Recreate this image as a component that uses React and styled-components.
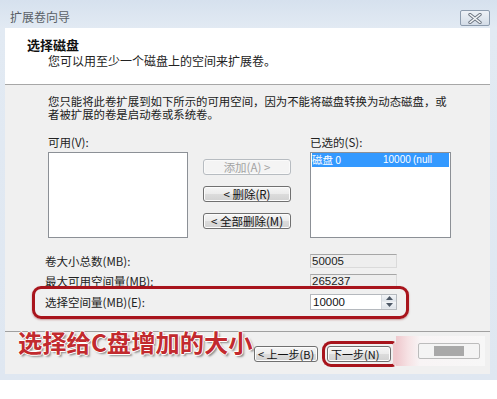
import React from "react";
import styled, { createGlobalStyle } from "styled-components";

const GlobalStyle = createGlobalStyle`
  body {
    margin: 0;
    background: #ffffff;
    font-family: "Noto Sans CJK SC", "DejaVu Sans", sans-serif;
  }
`;

const CJK = `"Noto Sans CJK SC", "Liberation Sans", sans-serif`;

export default function App() {
  return (
    <>
      <GlobalStyle />
      <Window>
        <TitleBar>
          <Title>扩展卷向导</Title>
          <CloseButton>
            <svg width="14" height="11" viewBox="0 0 14 11">
              <path d="M2 1.5 L12 9.5 M12 1.5 L2 9.5" stroke="#6b7480" strokeWidth="3.4" strokeLinecap="round" />
              <path d="M2 1.5 L12 9.5 M12 1.5 L2 9.5" stroke="#f4f6f8" strokeWidth="1.6" strokeLinecap="round" />
            </svg>
          </CloseButton>
        </TitleBar>

        <Header>
          <HeaderTitle>选择磁盘</HeaderTitle>
          <HeaderDesc>您可以用至少一个磁盘上的空间来扩展卷。</HeaderDesc>
        </Header>

        <Body>
          <Intro>
            <IntroLine>您只能将此卷扩展到如下所示的可用空间，因为不能将磁盘转换为动态磁盘，或</IntroLine>
            <IntroLine>者被扩展的卷是启动卷或系统卷。</IntroLine>
          </Intro>

          <ListsRow>
            <ListColumn>
              <Label>可用(V):</Label>
              <ListBox />
            </ListColumn>
            <ButtonColumn>
              <Button disabled>添加(A) &gt;</Button>
              <Button>&lt; 删除(R)</Button>
              <Button>&lt; 全部删除(M)</Button>
            </ButtonColumn>
            <ListColumn $right>
              <Label>已选的(S):</Label>
              <ListBox $wide>
                <SelectedItem>
                  <ItemName>磁盘 0</ItemName>
                  <ItemSize>10000</ItemSize>
                  <ItemType>(null</ItemType>
                </SelectedItem>
              </ListBox>
            </ListColumn>
          </ListsRow>

          <Fields>
            <Row>
              <RowLabel>卷大小总数(MB):</RowLabel>
              <Field>50005</Field>
            </Row>
            <Row>
              <RowLabel>最大可用空间量(MB):</RowLabel>
              <Field>265237</Field>
            </Row>
            <MarkedRow>
              <RowLabel>选择空间量(MB)(E):</RowLabel>
              <SpinField>
                <SpinValue>10000</SpinValue>
                <Spinner>
                  <SpinHalf>
                    <svg width="7" height="4" viewBox="0 0 7 4"><path d="M0 4 L3.5 0 L7 4 Z" fill="#4d5866" /></svg>
                  </SpinHalf>
                  <SpinHalf>
                    <svg width="7" height="4" viewBox="0 0 7 4"><path d="M0 0 L3.5 4 L7 0 Z" fill="#4d5866" /></svg>
                  </SpinHalf>
                </Spinner>
              </SpinField>
            </MarkedRow>
          </Fields>
        </Body>

        <Footer>
          <Annotation>选择给C盘增加的大小</Annotation>
          <FooterButtons>
            <Button $footer>&lt; 上一步(B)</Button>
            <NextMark>
              <Button $footer>下一步(N)</Button>
            </NextMark>
            <Mosaic>
              <MosaicButton>
                <MosaicBlock />
              </MosaicButton>
            </Mosaic>
          </FooterButtons>
        </Footer>
      </Window>
    </>
  );
}

const Window = styled.div`
  width: 497px;
  height: 380px;
  box-sizing: border-box;
  padding: 0 7px 5px 5px;
  display: flex;
  flex-direction: column;
  background: linear-gradient(to bottom, #d6e1ee 0px, #e2eaf3 28px, #dfe7f1 100%);
`;

const TitleBar = styled.div`
  height: 28px;
  display: flex;
  justify-content: space-between;
  align-items: flex-start;
`;

const Title = styled.div`
  margin: 9px 0 0 5px;
  font-family: ${CJK};
  font-size: 12px;
  line-height: 16px;
  color: #5a5f66;
`;

const CloseButton = styled.div`
  margin-top: 10px;
  width: 30px;
  height: 16px;
  box-sizing: border-box;
  border: 1px solid #8d9cae;
  border-radius: 2px;
  background: linear-gradient(to bottom, #eef2f7, #d3dce7);
  display: flex;
  align-items: center;
  justify-content: center;
`;

const Header = styled.div`
  height: 57px;
  box-sizing: border-box;
  padding: 9px 0 0 22px;
  background: #ffffff;
  border-bottom: 1px solid #a7a7a7;
`;

const HeaderTitle = styled.div`
  font-family: ${CJK};
  font-size: 13px;
  font-weight: 700;
  line-height: 16px;
  color: #111;
`;

const HeaderDesc = styled.div`
  margin-left: 21px;
  font-family: ${CJK};
  font-size: 12px;
  line-height: 16px;
  color: #222;
`;

const Body = styled.div`
  height: 247px;
  box-sizing: border-box;
  padding: 10px 0 0 27px;
  background: #f0f0f0;
  border-bottom: 1px solid #a0a0a0;
`;

const Intro = styled.div`
  margin-left: 16px;
  display: flex;
  flex-direction: column;
`;

const IntroLine = styled.div`
  height: 13px;
  font-family: ${CJK};
  font-size: 11.4px;
  line-height: 13px;
  color: #1a1a1a;
  white-space: nowrap;
`;

const ListsRow = styled.div`
  margin: 14px 0 0 16px;
  display: flex;
  align-items: flex-start;
`;

const ListColumn = styled.div`
  display: flex;
  flex-direction: column;
  margin-left: ${(p) => (p.$right ? "19px" : "0")};
`;

const Label = styled.div`
  font-family: ${CJK};
  font-size: 11.5px;
  line-height: 14px;
  height: 14px;
  margin-bottom: 3px;
  color: #222;
`;

const ListBox = styled.div`
  width: ${(p) => (p.$wide ? "141px" : "140px")};
  height: 86px;
  box-sizing: border-box;
  border: 1px solid #8c9096;
  background: #ffffff;
  padding: 0 1px;
  overflow: hidden;
`;

const SelectedItem = styled.div`
  height: 14px;
  background: #3399ff;
  color: #ffffff;
  display: flex;
  align-items: center;
  font-family: ${CJK};
  font-size: 10.5px;
  line-height: 14px;
  white-space: nowrap;
  overflow: hidden;
`;

const ItemName = styled.span`
  flex: none;
  width: 71px;
`;

const ItemSize = styled.span`
  flex: none;
  width: 30px;
  font-family: "Liberation Sans", sans-serif;
  font-size: 10px;
`;

const ItemType = styled.span`
  flex: none;
  font-family: "Liberation Sans", sans-serif;
  font-size: 10px;
`;

const ButtonColumn = styled.div`
  margin: 24px 0 0 15px;
  display: flex;
  flex-direction: column;
  gap: 11px;
`;

const Button = styled.div`
  width: ${(p) => (p.$footer ? "64px" : "88px")};
  height: 16px;
  box-sizing: border-box;
  border: 1px solid ${(p) => (p.disabled ? "#b7bcc1" : "#707070")};
  border-radius: 3px;
  background: ${(p) =>
    p.disabled
      ? "#f4f4f4"
      : "linear-gradient(to bottom, #f6f6f6 0%, #ebebeb 50%, #dcdcdc 51%, #d2d2d2 100%)"};
  box-shadow: inset 0 0 0 1px ${(p) => (p.disabled ? "#fafafa" : "#fcfcfc")};
  display: flex;
  align-items: center;
  justify-content: ${(p) => (p.$footer ? "flex-start" : "center")};
  padding-left: ${(p) => (p.$footer ? "3px" : "0")};
  font-family: ${CJK};
  font-size: ${(p) => (p.$footer ? "11px" : "11.5px")};
  line-height: 14px;
  color: ${(p) => (p.disabled ? "#a3a3a3" : "#111")};
  white-space: nowrap;
  overflow: hidden;
`;

const Fields = styled.div`
  margin-top: 13px;
  display: flex;
  flex-direction: column;
`;

const Row = styled.div`
  height: 20px;
  display: flex;
  align-items: center;
  padding-left: 13px;
`;

const MarkedRow = styled(Row)`
  height: auto;
  width: 377px;
  box-sizing: border-box;
  margin-top: -5px;
  padding: 5px 9px 6px 10px;
  border: 3px solid #a8141c;
  border-radius: 9px;
  box-shadow: 0 1px 2px rgba(120, 0, 0, 0.35);
`;

const RowLabel = styled.div`
  width: 265px;
  font-family: ${CJK};
  font-size: 11.5px;
  line-height: 14px;
  color: #222;
`;

const Field = styled.div`
  width: 87px;
  height: 14px;
  box-sizing: border-box;
  border: 1px solid #dadada;
  border-top-color: #a6a6a6;
  border-left-color: #c4c4c4;
  background: #eeeeee;
  padding-left: 1px;
  font-family: "Liberation Sans", sans-serif;
  font-size: 11.5px;
  line-height: 12px;
  color: #222;
`;

const SpinField = styled.div`
  width: 87px;
  height: 16px;
  box-sizing: border-box;
  border: 1px solid #b5b9be;
  background: #ffffff;
  display: flex;
`;

const SpinValue = styled.div`
  flex: 1;
  padding-left: 2px;
  font-family: "Liberation Sans", sans-serif;
  font-size: 11.5px;
  line-height: 14px;
  color: #111;
`;

const Spinner = styled.div`
  width: 14px;
  display: flex;
  flex-direction: column;
  border-left: 1px solid #d4d8dd;
`;

const SpinHalf = styled.div`
  flex: 1;
  display: flex;
  align-items: center;
  justify-content: center;
  background: linear-gradient(to bottom, #f3f5f8, #dfe4ea);
  border-bottom: 1px solid #e6e9ed;
`;

const Footer = styled.div`
  height: 42px;
  box-sizing: border-box;
  padding: 0 5px 0 13px;
  background: #f0f0f0;
  display: flex;
  align-items: flex-start;
`;

const Annotation = styled.div`
  margin-top: -3px;
  width: 238px;
  font-family: ${CJK};
  font-size: 24.3px;
  font-weight: 700;
  line-height: 26px;
  color: #c22a2e;
  white-space: nowrap;
  text-shadow: -1px 0 #fff, 1px 0 #fff, 0 -1px #fff, 0 1px #fff, 2px 2px 2px rgba(60, 60, 60, 0.55);
`;

const FooterButtons = styled.div`
  margin-left: auto;
  padding-top: 14px;
  display: flex;
  align-items: flex-start;
`;

const NextMark = styled.div`
  margin: -5px 0 0 4px;
  padding: 2px;
  border: 3px solid #a8141c;
  border-right-color: #f0c9cd;
  border-radius: 9px 4px 4px 9px;
`;

const Mosaic = styled.div`
  width: 89px;
  height: 30px;
  margin-top: -10px;
  display: flex;
  align-items: center;
  justify-content: flex-end;
  padding-right: 5px;
  box-sizing: border-box;
  background: linear-gradient(to right, #efc8cd 0px, #f6e2e4 12px, #f8f4f5 24px, #f7f7f7 100%);
`;

const MosaicButton = styled.div`
  width: 62px;
  height: 16px;
  box-sizing: border-box;
  border: 1px solid #bcbcbc;
  border-radius: 2px;
  background: #f4f4f4;
  display: flex;
  align-items: center;
  justify-content: center;
`;

const MosaicBlock = styled.div`
  width: 30px;
  height: 10px;
  background: #a9a9a9;
  filter: blur(0.5px);
`;
